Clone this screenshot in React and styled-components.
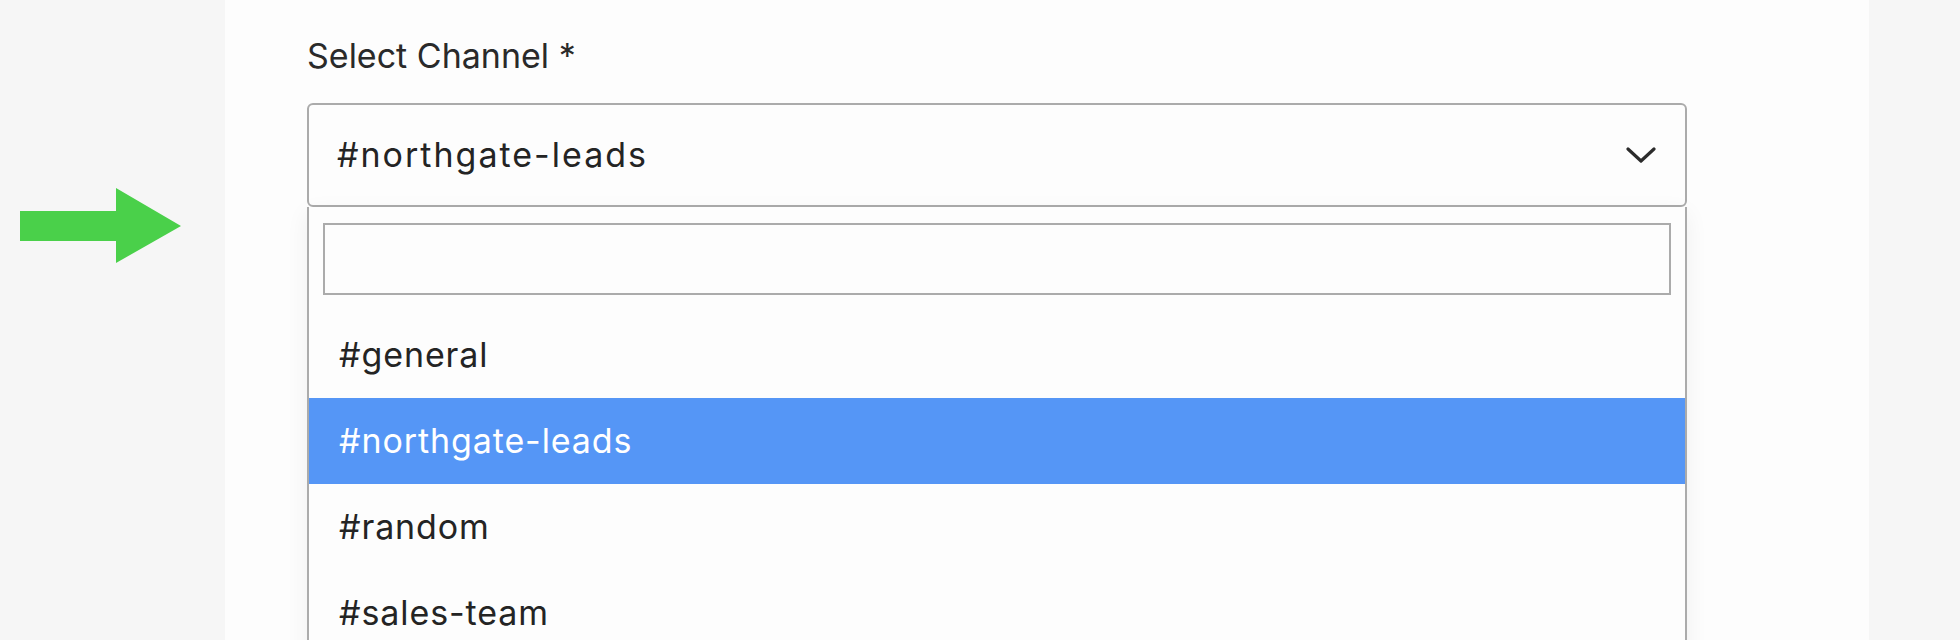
import React from "react";
import styled, { createGlobalStyle } from "styled-components";

const GlobalStyle = createGlobalStyle`
  html, body {
    margin: 0;
    padding: 0;
    background: #f6f6f6;
    font-family: Inter, "Open Sans", Arial, sans-serif;
    color: #242424;
  }
`;

const Page = styled.div`
  display: flex;
  height: 640px;
  overflow: hidden;
`;

const Gutter = styled.div`
  width: 225px;
  flex-shrink: 0;
  padding: 188px 0 0 19px;
  box-sizing: border-box;
`;

const Panel = styled.div`
  width: 1644px;
  flex-shrink: 0;
  background: #fdfdfd;
  padding: 36px 0 0 82px;
  box-sizing: border-box;
`;

const Field = styled.div`
  width: 1380px;
  display: flex;
  flex-direction: column;
`;

const Label = styled.label`
  font-size: 34px;
  line-height: 40px;
  color: #2a2a2a;
  margin-bottom: 27px;
`;

const Trigger = styled.div`
  height: 104px;
  box-sizing: border-box;
  border: 2px solid #ababab;
  border-radius: 6px;
  display: flex;
  align-items: center;
  justify-content: space-between;
  padding: 0 29px 0 28px;
  background: #fdfdfd;
`;

const Value = styled.span`
  font-size: 34px;
  line-height: 40px;
  letter-spacing: 2px;
  color: #242424;
`;

const Menu = styled.div`
  border: 2px solid #ababab;
  border-top: none;
  background: #fdfdfd;
  box-shadow: 0 6px 22px rgba(0, 0, 0, 0.06);
`;

const SearchWrap = styled.div`
  padding: 16px 14px 17px;
`;

const Search = styled.input`
  display: block;
  width: 100%;
  height: 72px;
  box-sizing: border-box;
  border: 2px solid #ababab;
  border-radius: 0;
  background: #fdfdfd;
  outline: none;
  font-size: 30px;
  font-family: inherit;
  padding: 0 14px;
`;

const Option = styled.div`
  height: 86px;
  display: flex;
  align-items: center;
  padding-left: 30px;
  font-size: 34px;
  line-height: 40px;
  letter-spacing: 0.9px;
  background: ${(p) => (p.$active ? "#5596f6" : "transparent")};
  color: ${(p) => (p.$active ? "#ffffff" : "#242424")};
`;

const Chevron = () => (
  <svg width="30" height="17" viewBox="0 0 30 17" fill="none">
    <path
      d="M2 2L15 14L28 2"
      stroke="#2b2b2b"
      strokeWidth="3.2"
      strokeLinecap="round"
      strokeLinejoin="round"
    />
  </svg>
);

const GreenArrow = () => (
  <svg width="162" height="75" viewBox="0 0 162 75">
    <path d="M1 23H97V0L162 38L97 75V53H1Z" fill="#4ad04a" />
  </svg>
);

const channels = ["#general", "#northgate-leads", "#random", "#sales-team"];

export default function App() {
  const selected = "#northgate-leads";
  return (
    <>
      <GlobalStyle />
      <Page>
        <Gutter>
          <GreenArrow />
        </Gutter>
        <Panel>
          <Field>
            <Label>Select Channel *</Label>
            <Trigger>
              <Value>{selected}</Value>
              <Chevron />
            </Trigger>
            <Menu>
              <SearchWrap>
                <Search type="text" />
              </SearchWrap>
              {channels.map((c) => (
                <Option key={c} $active={c === selected}>
                  {c}
                </Option>
              ))}
            </Menu>
          </Field>
        </Panel>
      </Page>
    </>
  );
}
